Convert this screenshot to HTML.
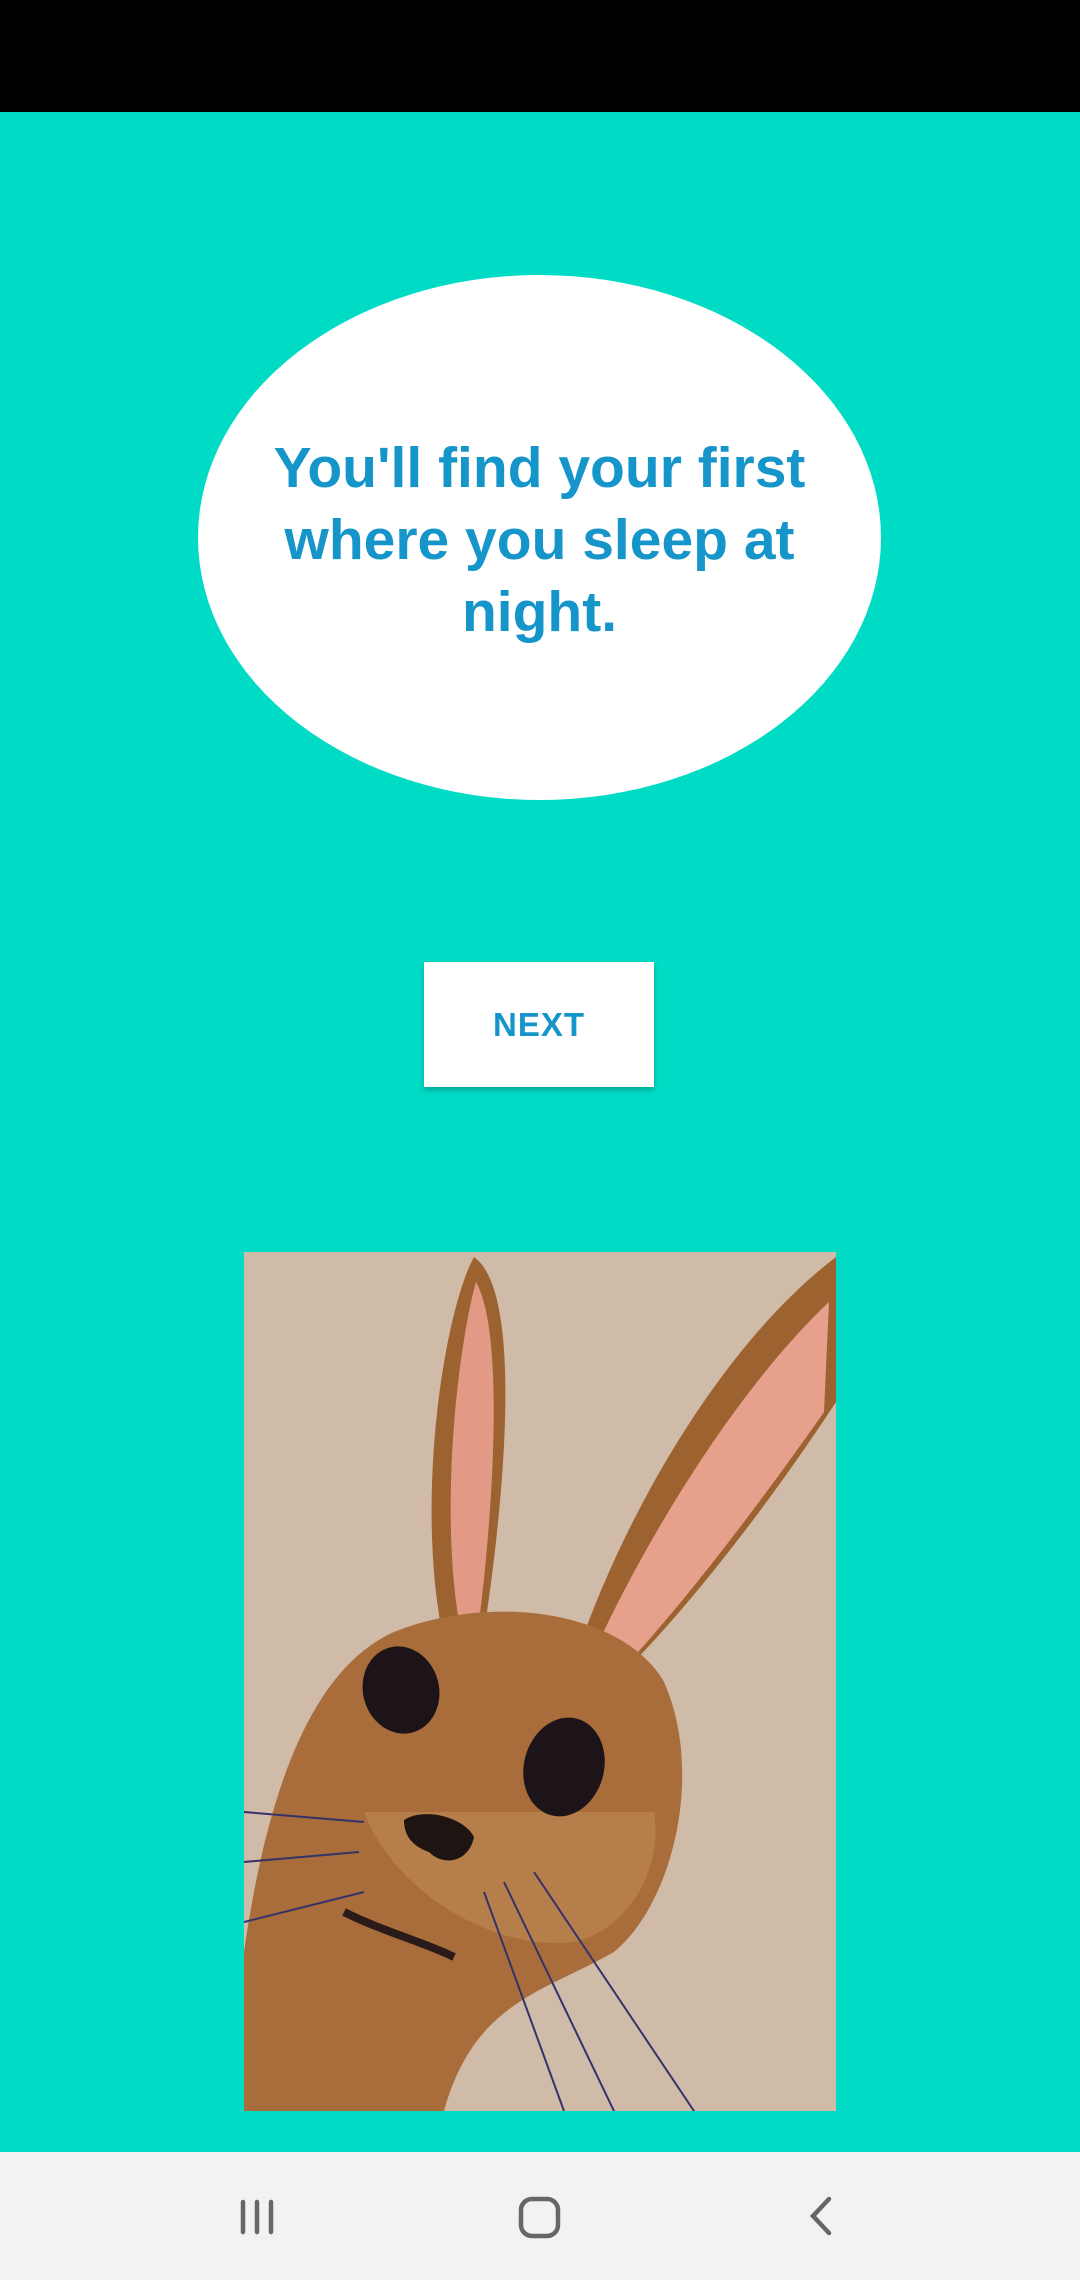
<!DOCTYPE html>
<html><head><meta charset="utf-8"><style>
html,body{margin:0;padding:0;width:1080px;height:2280px;overflow:hidden;background:#00dbc5;font-family:"Liberation Sans",Roboto,sans-serif;position:relative;}
.status{position:absolute;left:0;top:0;width:1080px;height:112px;background:#000;}
.oval{position:absolute;left:198px;top:275px;width:683px;height:525px;border-radius:50%;background:#fff;display:flex;align-items:center;justify-content:center;}
.oval div{color:#1595c9;font-weight:bold;font-size:57px;line-height:72px;text-align:center;width:580px;margin-top:4px;}
.btn{position:absolute;left:424px;top:962px;width:230px;height:125px;background:#fff;box-shadow:0 3px 5px rgba(0,0,0,.25);color:#1595c9;font-weight:bold;font-size:33px;display:flex;align-items:center;justify-content:center;letter-spacing:1px;}
.img{position:absolute;left:244px;top:1252px;width:592px;height:859px;}
.nav{position:absolute;left:0;bottom:0;width:1080px;height:128px;background:#f2f2f2;overflow:hidden;}
.nav svg{display:block;}
</style></head><body>
<div class="status"></div>
<div class="oval"><div>You'll find your first where you sleep at night.</div></div>
<div class="btn">NEXT</div>
<svg class="img" viewBox="0 0 592 859">
<rect width="592" height="859" fill="#cfbba8"/>
<path d="M200 390 C170 250 200 60 230 5 C280 40 260 250 240 380Z" fill="#9c6330"/>
<path d="M215 370 C195 250 215 90 232 30 C260 80 250 250 235 370Z" fill="#e29a86"/>
<path d="M330 410 C380 260 480 90 592 5 L592 150 C520 260 440 360 380 420Z" fill="#9c6330"/>
<path d="M350 400 C410 270 500 130 585 50 L580 160 C510 260 440 350 385 410Z" fill="#e6a08c"/>
<path d="M0 859 L0 700 C20 560 60 420 150 380 C250 340 380 360 420 430 C460 520 430 650 370 700 C300 740 230 750 200 859Z" fill="#a86d3a"/>
<path d="M120 560 C150 640 250 700 330 690 C380 680 420 620 410 560" fill="#c08a55" opacity=".6"/>
<ellipse cx="157" cy="438" rx="38" ry="44" fill="#1c1418" transform="rotate(-15 157 438)"/>
<ellipse cx="320" cy="515" rx="40" ry="50" fill="#1c1418" transform="rotate(15 320 515)"/>
<path d="M160 568 C180 555 220 565 230 585 C225 610 200 615 185 600 C170 595 160 585 160 568Z" fill="#1e1412"/>
<path d="M100 660 C140 680 180 690 210 705" stroke="#2a1a1a" stroke-width="8" fill="none"/>
<g stroke="#33336a" stroke-width="2" fill="none">
<path d="M240 640 L320 859"/><path d="M260 630 L370 859"/><path d="M290 620 L450 859"/>
<path d="M120 570 L0 560"/><path d="M115 600 L0 610"/><path d="M120 640 L0 670"/>
</g>
</svg>
<div class="nav">
<svg width="1080" height="128" viewBox="0 0 1080 128">
<g stroke="#666" stroke-width="4.5" fill="none" stroke-linecap="round">
<path d="M243 50v30M257 50v30M271 50v30"/>
<rect x="521" y="47" width="37" height="37" rx="11"/>
<path d="M829 47l-16 17 16 17"/>
</g></svg></div>
</body></html>
